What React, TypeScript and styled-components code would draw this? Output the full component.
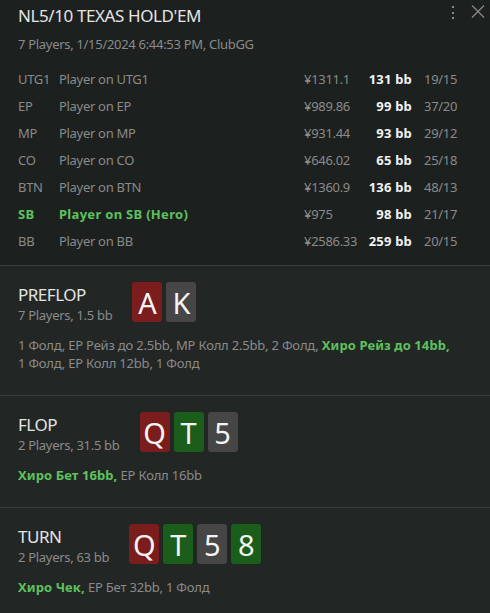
import styled, { createGlobalStyle } from 'styled-components'

const Global = createGlobalStyle`
  html, body {
    margin: 0;
    padding: 0;
    background: #222726;
  }
  body {
    font-family: 'Noto Sans', 'Open Sans', sans-serif;
    -webkit-font-smoothing: antialiased;
  }
`

const Panel = styled.div`
  width: 490px;
  min-height: 613px;
  background: #222726;
  color: #8c8c8c;
  letter-spacing: -0.3px;
`

const Header = styled.header`
  position: relative;
  background: #1c211f;
  padding: 4px 18px 11px;
  border-bottom: 1px solid #3a3f3d;
`

const Title = styled.h1`
  margin: 0;
  font-size: 17px;
  line-height: 24px;
  font-weight: 400;
  letter-spacing: -0.4px;
  color: #e4e4e4;
`

const Subtitle = styled.div`
  margin-top: 7px;
  font-size: 13px;
  line-height: 18px;
  color: #8a8a8a;
`

const Tools = styled.div`
  position: absolute;
  top: 4px;
  right: 5px;
  display: flex;
  align-items: flex-start;
  gap: 15px;
`

const IconButton = styled.button`
  border: none;
  background: none;
  padding: 0;
  display: flex;
  color: #8a8a8a;
  cursor: pointer;
`

const Table = styled.div`
  margin-top: 12px;
`

const Row = styled.div<{ $hero?: boolean }>`
  display: grid;
  grid-template-columns: 41px 1fr 62px 46px 60px;
  height: 27px;
  align-items: center;
  font-size: 13px;
  color: #8a8a8a;

  & > span:nth-child(-n + 2) {
    color: ${({ $hero }) => ($hero ? '#5ec15e' : '#8a8a8a')};
    font-weight: ${({ $hero }) => ($hero ? 700 : 400)};
    letter-spacing: ${({ $hero }) => ($hero ? '0.3px' : '-0.3px')};
  }
`

const Cell = styled.span`
  white-space: nowrap;
`

const BigBlinds = styled.span`
  text-align: right;
  font-weight: 700;
  letter-spacing: 0.2px;
  color: #f2f2f2;
  white-space: nowrap;
`

const Stats = styled.span`
  padding-left: 12px;
  white-space: nowrap;
`

const Street = styled.section`
  padding: 16px 18px 23px;
  border-bottom: 1px solid #3a3f3d;

  &:last-child {
    border-bottom: none;
  }
`

const StreetHead = styled.div`
  display: flex;
  align-items: flex-start;
  gap: 20px;
`

const StreetInfo = styled.div`
  padding-top: 2px;
`

const StreetName = styled.div`
  font-size: 17px;
  line-height: 22px;
  letter-spacing: -0.5px;
  color: #e4e4e4;
`

const StreetMeta = styled.div`
  font-size: 13px;
  line-height: 18px;
  color: #8a8a8a;
`

const Cards = styled.div`
  display: flex;
  gap: 4px;
`

const Card = styled.div<{ $suit: 'red' | 'green' | 'gray' }>`
  width: 30px;
  height: 40px;
  border-radius: 3px;
  display: flex;
  align-items: center;
  justify-content: center;
  font-size: 29px;
  letter-spacing: 0;
  color: #f4f4f4;
  background: ${({ $suit }) =>
    $suit === 'red' ? '#7b1d1d' : $suit === 'green' ? '#1b5d1b' : '#464646'};
`

const Actions = styled.p`
  margin: 12px 0 0;
  font-size: 13px;
  line-height: 18px;
  letter-spacing: -0.2px;
  color: #8a8a8a;
`

const Action = styled.span<{ $hero?: boolean }>`
  white-space: nowrap;
  color: ${({ $hero }) => ($hero ? '#5ec15e' : 'inherit')};
  font-weight: ${({ $hero }) => ($hero ? 700 : 400)};
  letter-spacing: ${({ $hero }) => ($hero ? '0.1px' : 'inherit')};
`

type Suit = 'red' | 'green' | 'gray'

const players = [
  { pos: 'UTG1', name: 'Player on UTG1', stack: '¥1311.1', bb: '131 bb', stats: '19/15' },
  { pos: 'EP', name: 'Player on EP', stack: '¥989.86', bb: '99 bb', stats: '37/20' },
  { pos: 'MP', name: 'Player on MP', stack: '¥931.44', bb: '93 bb', stats: '29/12' },
  { pos: 'CO', name: 'Player on CO', stack: '¥646.02', bb: '65 bb', stats: '25/18' },
  { pos: 'BTN', name: 'Player on BTN', stack: '¥1360.9', bb: '136 bb', stats: '48/13' },
  { pos: 'SB', name: 'Player on SB (Hero)', stack: '¥975', bb: '98 bb', stats: '21/17', hero: true },
  { pos: 'BB', name: 'Player on BB', stack: '¥2586.33', bb: '259 bb', stats: '20/15' },
]

const streets: {
  name: string
  meta: string
  cards: [string, Suit][]
  actions: [string, boolean?][]
}[] = [
  {
    name: 'PREFLOP',
    meta: '7 Players, 1.5 bb',
    cards: [
      ['A', 'red'],
      ['K', 'gray'],
    ],
    actions: [
      ['1 Фолд'],
      ['EP Рейз до 2.5bb'],
      ['MP Колл 2.5bb'],
      ['2 Фолд'],
      ['Хиро Рейз до 14bb', true],
      ['1 Фолд'],
      ['EP Колл 12bb'],
      ['1 Фолд'],
    ],
  },
  {
    name: 'FLOP',
    meta: '2 Players, 31.5 bb',
    cards: [
      ['Q', 'red'],
      ['T', 'green'],
      ['5', 'gray'],
    ],
    actions: [['Хиро Бет 16bb', true], ['EP Колл 16bb']],
  },
  {
    name: 'TURN',
    meta: '2 Players, 63 bb',
    cards: [
      ['Q', 'red'],
      ['T', 'green'],
      ['5', 'gray'],
      ['8', 'green'],
    ],
    actions: [['Хиро Чек', true], ['EP Бет 32bb'], ['1 Фолд']],
  },
]

export default function App() {
  return (
    <Panel>
      <Global />
      <Header>
        <Title>NL5/10 TEXAS HOLD'EM</Title>
        <Subtitle>7 Players, 1/15/2024 6:44:53 PM, ClubGG</Subtitle>
        <Tools>
          <IconButton aria-label="menu">
            <svg width="6" height="18" viewBox="0 0 6 18" fill="currentColor">
              <rect x="2" y="2" width="2" height="2" />
              <rect x="2" y="8" width="2" height="2" />
              <rect x="2" y="13" width="2" height="2" />
            </svg>
          </IconButton>
          <IconButton aria-label="close">
            <svg width="14" height="16" viewBox="0 0 14 16" stroke="currentColor" strokeWidth="1.2">
              <path d="M1 1.5 L13 13.5 M13 1.5 L1 13.5" />
            </svg>
          </IconButton>
        </Tools>
        <Table>
          {players.map((p) => (
            <Row key={p.pos} $hero={p.hero}>
              <Cell>{p.pos}</Cell>
              <Cell>{p.name}</Cell>
              <Cell>{p.stack}</Cell>
              <BigBlinds>{p.bb}</BigBlinds>
              <Stats>{p.stats}</Stats>
            </Row>
          ))}
        </Table>
      </Header>
      {streets.map((s) => (
        <Street key={s.name}>
          <StreetHead>
            <StreetInfo>
              <StreetName>{s.name}</StreetName>
              <StreetMeta>{s.meta}</StreetMeta>
            </StreetInfo>
            <Cards>
              {s.cards.map(([rank, suit], i) => (
                <Card key={i} $suit={suit}>
                  {rank}
                </Card>
              ))}
            </Cards>
          </StreetHead>
          <Actions>
            {s.actions.map(([text, hero], i) => (
              <span key={i}>
                <Action $hero={hero}>
                  {text}
                  {i < s.actions.length - 1 ? ',' : ''}
                </Action>
                {i < s.actions.length - 1 ? ' ' : ''}
              </span>
            ))}
          </Actions>
        </Street>
      ))}
    </Panel>
  )
}
